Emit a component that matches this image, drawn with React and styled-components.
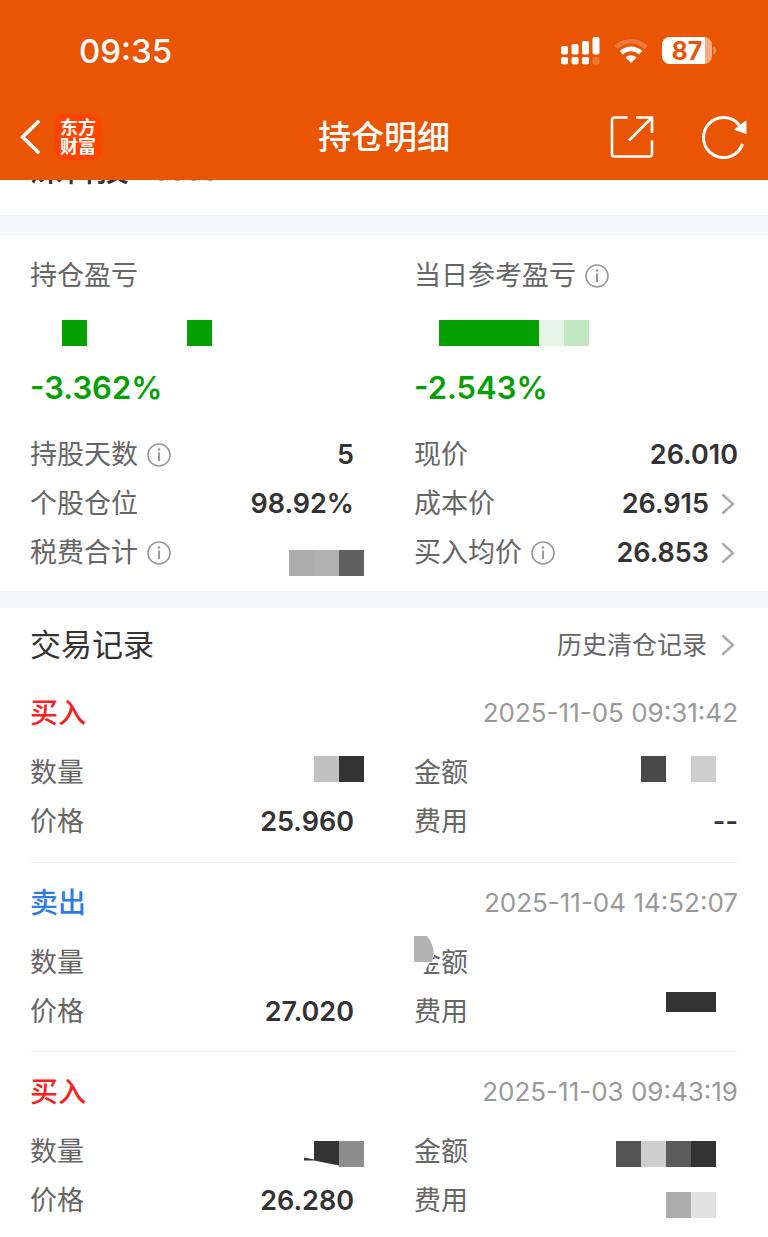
import React from "react";
import styled, { createGlobalStyle } from "styled-components";

const GlobalStyle = createGlobalStyle`
  * { box-sizing: border-box; }
  body {
    margin: 0;
    background: #fff;
    color: #333;
    font-family: Inter, "Noto Sans CJK SC", sans-serif;
    -webkit-font-smoothing: antialiased;
  }
  h1, h2, h3, dl, dt, dd, p { margin: 0; font-weight: inherit; }
  button { border: 0; padding: 0; background: none; font: inherit; color: inherit; cursor: pointer; }
  a { color: inherit; text-decoration: none; }
  svg { display: block; }
`;

const Header = styled.header`
  position: sticky;
  top: 0;
  z-index: 2;
  background: #ea5504;
  color: #fff;
`;

const StatusBar = styled.div`
  display: flex;
  justify-content: space-between;
  align-items: center;
  height: 94px;
  padding: 8px 52px 0 79px;
`;

const Clock = styled.time`
  font-size: 33px;
  line-height: 40px;
  font-weight: 500;
`;

const StatusIcons = styled.div`
  display: flex;
  align-items: center;
  gap: 14px;
`;

const NavBar = styled.nav`
  display: grid;
  grid-template-columns: 1fr auto 1fr;
  align-items: center;
  height: 86px;
  padding: 0 20px;
`;

const NavSide = styled.div`
  display: flex;
  align-items: center;
  gap: ${(p) => p.$gap}px;
  justify-content: ${(p) => (p.$end ? "flex-end" : "flex-start")};
`;

const PageTitle = styled.h1`
  font-size: 33px;
  line-height: 48px;
  font-weight: 500;
`;

const Logo = styled.a`
  display: grid;
  place-content: center;
  width: 46px;
  height: 46px;
  padding-bottom: 3px;
  border-radius: 8px;
  background: #ff4400;
  font-family: "Noto Sans CJK SC", sans-serif;
  font-size: 18px;
  line-height: 19px;
  font-weight: 700;
  text-align: center;
`;

const StockBar = styled.section`
  display: flex;
  align-items: flex-end;
  height: 35px;
  padding: 0 30px 31px;
  overflow: hidden;
`;

const StockTitle = styled.div`
  display: flex;
  align-items: baseline;
  gap: 24px;
  line-height: 24px;
`;

const StockName = styled.h2`
  font-size: 33px;
  font-weight: 500;
`;

const StockCode = styled.span`
  font-size: 26px;
  color: #999;
`;

const Band = styled.div`
  height: ${(p) => p.$size}px;
  background: #f6f7fa;
`;

const Summary = styled.section`
  padding: 21px 30px 14px;
`;

const Columns = styled.div`
  display: grid;
  grid-template-columns: 1fr 1fr;
  column-gap: 60px;
`;

const Label = styled.span`
  display: inline-flex;
  align-items: center;
  gap: 9px;
  font-size: 27px;
  line-height: 40px;
  color: #666;
`;

const Change = styled.p`
  font-size: 31px;
  line-height: 40px;
  font-weight: 600;
  color: #04a004;
`;

const Gain = styled.div`
  display: flex;
  flex-direction: column;
  padding-bottom: 22px;
`;

const Fields = styled.dl`
  display: flex;
  flex-direction: column;
`;

const Field = styled.div`
  display: flex;
  justify-content: space-between;
  align-items: center;
  height: 49px;
`;

const Value = styled.dd`
  font-size: 27px;
  line-height: 40px;
  font-weight: 600;
`;

const LinkValue = styled.button`
  display: flex;
  align-items: center;
  gap: 11px;
`;

const MaskRow = styled.span`
  display: flex;
  margin: ${(p) => p.$margin || "0"};
`;

const Block = styled.span`
  width: ${(p) => p.$w || 25}px;
  height: ${(p) => p.$h || 26}px;
  background: ${(p) => p.$color};
  clip-path: ${(p) => p.$clip || "none"};
`;

const Records = styled.section`
  padding: 0 30px;
`;

const RecordsHead = styled.header`
  display: flex;
  justify-content: space-between;
  align-items: center;
  height: 65px;
  padding-top: 8px;
`;

const RecordsTitle = styled.h2`
  font-size: 31px;
  line-height: 44px;
`;

const HistoryLink = styled.a`
  display: flex;
  align-items: center;
  gap: 13px;
  font-size: 25px;
  line-height: 40px;
  color: #666;
`;

const Record = styled.article`
  height: 189px;
  padding-top: 20px;
  & + & {
    border-top: 1px solid #f0f0f0;
  }
`;

const RecordHead = styled.div`
  display: flex;
  justify-content: space-between;
  align-items: center;
  height: 40px;
  margin-bottom: 15px;
`;

const Side = styled.h3`
  font-size: 28px;
  line-height: 40px;
  font-weight: 500;
  color: ${(p) => (p.$sell ? "#2d7be5" : "#fb2020")};
`;

const Stamp = styled.time`
  font-size: 26px;
  line-height: 40px;
  color: #999;
`;

const Smudged = styled.span`
  position: relative;
`;

const Smudge = styled.svg`
  position: absolute;
  left: 0;
  top: -7px;
`;

const Signal = () => (
  <svg width="40" height="28" viewBox="0 0 40 28" fill="#fff" aria-hidden="true">
    <rect x="1" y="9" width="7" height="8.500" rx="2" />
    <rect x="11.500" y="7" width="7" height="10.500" rx="2" />
    <rect x="22" y="4" width="7" height="13.500" rx="2" />
    <rect x="32.500" y="0" width="7" height="17.500" rx="2" />
    <rect x="1" y="20" width="7" height="7.500" rx="2" />
    <rect x="11.500" y="20" width="7" height="7.500" rx="2" />
    <rect x="22" y="20" width="7" height="7.500" rx="2" />
    <rect x="32.500" y="20" width="7" height="7.500" rx="2" opacity=".2" />
  </svg>
);

const Wifi = () => (
  <svg width="34" height="26" viewBox="0 0 34 26" fill="none" stroke="#fff" aria-hidden="true">
    <path d="M2 9.500C10.500 1.200 23.500 1.200 32 9.500" strokeWidth="4.500" opacity=".22" />
    <path d="M7.300 14.800C13 9.600 21 9.600 26.700 14.800" strokeWidth="4.800" />
    <path d="M11.500 19.500C14.800 16.600 19.200 16.600 22.500 19.500L17 25Z" fill="#fff" stroke="none" />
  </svg>
);

const Battery = () => (
  <svg width="54" height="28" viewBox="0 0 54 28" role="img" aria-label="87%">
    <defs>
      <clipPath id="cell"><rect width="50" height="27" rx="8" /></clipPath>
    </defs>
    <g clipPath="url(#cell)">
      <rect width="50" height="27" fill="#f5aa82" />
      <rect width="43" height="27" fill="#fff" />
    </g>
    <path d="M51.500 9.500c3 1.500 3 6.500 0 8z" fill="#f5aa82" />
    <text x="25" y="22.500" textAnchor="middle" fontFamily="Inter, sans-serif" fontSize="25" fontWeight="700" fill="#ea5504">87</text>
  </svg>
);

const Back = () => (
  <svg width="20" height="34" viewBox="0 0 20 34" fill="none" stroke="#fff" strokeWidth="3.800" strokeLinecap="round" strokeLinejoin="round" aria-hidden="true">
    <path d="M18 2L2.500 17L18 32" />
  </svg>
);

const Share = () => (
  <svg width="44" height="44" viewBox="0 0 44 44" fill="none" stroke="#fff" strokeWidth="2.600" aria-hidden="true">
    <path d="M17.500 2.500H4.500a2.500 2.500 0 0 0-2.500 2.500V39a2.500 2.500 0 0 0 2.500 2.500H39.500a2.500 2.500 0 0 0 2.500-2.500V25.500" />
    <path d="M26 2.500H42V18M42 2.500L19 25.500" />
  </svg>
);

const Refresh = () => (
  <svg width="46" height="44" viewBox="0 0 46 44" fill="none" stroke="#fff" strokeWidth="3" aria-hidden="true">
    <path d="M40.500 29A20 20 0 1 1 37.500 10.500" />
    <path d="M44 6V18.500L32.500 14.500Z" fill="#fff" strokeWidth="1" strokeLinejoin="round" />
  </svg>
);

const Info = () => (
  <svg width="24" height="24" viewBox="0 0 24 24" fill="none" stroke="#999" strokeWidth="1.600" aria-hidden="true">
    <circle cx="12" cy="12" r="11" />
    <path d="M12 9.500V18" strokeWidth="2" />
    <circle cx="12" cy="6.500" r="1.300" fill="#999" stroke="none" />
  </svg>
);

const Chevron = () => (
  <svg width="18" height="22" viewBox="0 0 18 22" fill="none" stroke="#aaa" strokeWidth="2.400" strokeLinecap="round" aria-hidden="true">
    <path d="M3 2L13 11L3 20" />
  </svg>
);

const InfoButton = ({ about }) => (
  <button type="button" aria-label={`${about}说明`}><Info /></button>
);

const Mask = ({ colors, margin }) => (
  <MaskRow $margin={margin}>
    {colors.map((c, i) => <Block key={i} $color={c} />)}
  </MaskRow>
);

const Row = ({ label, info, link, children }) => (
  <Field>
    <dt><Label>{label}{info && <InfoButton about={label} />}</Label></dt>
    <Value>
      {link ? <LinkValue type="button">{children}<Chevron /></LinkValue> : children}
    </Value>
  </Field>
);

const Trade = ({ side, sell, time, count, amount, amountLabel = "金额", price, fee }) => (
  <Record>
    <RecordHead>
      <Side $sell={sell}>{side}</Side>
      <Stamp>{time}</Stamp>
    </RecordHead>
    <Columns>
      <Fields>
        <Row label="数量">{count}</Row>
        <Row label="价格">{price}</Row>
      </Fields>
      <Fields>
        <Row label={amountLabel}>{amount}</Row>
        <Row label="费用">{fee}</Row>
      </Fields>
    </Columns>
  </Record>
);

export default function App() {
  return (
    <>
      <GlobalStyle />
      <Header>
        <StatusBar>
          <Clock>09:35</Clock>
          <StatusIcons><Signal /><Wifi /><Battery /></StatusIcons>
        </StatusBar>
        <NavBar>
          <NavSide $gap={15}>
            <button type="button" aria-label="返回"><Back /></button>
            <Logo href="#home">东方<br />财富</Logo>
          </NavSide>
          <PageTitle>持仓明细</PageTitle>
          <NavSide $gap={48} $end>
            <button type="button" aria-label="分享"><Share /></button>
            <button type="button" aria-label="刷新"><Refresh /></button>
          </NavSide>
        </NavBar>
      </Header>
      <main>
        <StockBar>
          <StockTitle>
            <StockName>深科技</StockName>
            <StockCode>0000</StockCode>
          </StockTitle>
        </StockBar>
        <Band $size={20} />
        <Summary>
          <Columns>
            <Gain>
              <Label>持仓盈亏</Label>
              <Mask margin="24px 0 22px 32px" colors={["#04a004", "transparent", "transparent", "transparent", "transparent", "#04a004"]} />
              <Change>-3.362%</Change>
            </Gain>
            <Gain>
              <Label>当日参考盈亏<InfoButton about="当日参考盈亏" /></Label>
              <Mask margin="24px 0 22px 25px" colors={["#04a004", "#04a004", "#04a004", "#04a004", "#e6f4e6", "#c1e7c1"]} />
              <Change>-2.543%</Change>
            </Gain>
          </Columns>
          <Columns>
            <Fields>
              <Row label="持股天数" info>5</Row>
              <Row label="个股仓位">98.92%</Row>
              <Row label="税费合计" info>
                <Mask margin="20px -10px 0 0" colors={["#acacac", "#b0b0b0", "#606060"]} />
              </Row>
            </Fields>
            <Fields>
              <Row label="现价">26.010</Row>
              <Row label="成本价" link>26.915</Row>
              <Row label="买入均价" info link>26.853</Row>
            </Fields>
          </Columns>
        </Summary>
        <Band $size={17} />
        <Records>
          <RecordsHead>
            <RecordsTitle>交易记录</RecordsTitle>
            <HistoryLink href="#history">历史清仓记录<Chevron /></HistoryLink>
          </RecordsHead>
          <Trade
            side="买入"
            time="2025-11-05 09:31:42"
            count={<Mask margin="0 -10px 8px 0" colors={["#c1c1c1", "#333"]} />}
            amount={<Mask margin="0 22px 8px 0" colors={["#484848", "transparent", "#cecece"]} />}
            price="25.960"
            fee="--"
          />
          <Trade
            side="卖出"
            sell
            time="2025-11-04 14:52:07"
            amountLabel={
              <Smudged>
                金额
                <Smudge width="32" height="40" viewBox="0 0 32 40" aria-hidden="true">
                  <path d="M0 0H20V20L13 31L9 39H0Z" fill="#fff" />
                  <path d="M0 0H13C17.500 6 20 12 19.500 18L18 26H0Z" fill="#b3b3b3" />
                </Smudge>
              </Smudged>
            }
            price="27.020"
            fee={<MaskRow $margin="0 22px 20px 0"><Block $w={50} $h={20} $color="#333" /></MaskRow>}
          />
          <Trade
            side="买入"
            time="2025-11-03 09:43:19"
            count={
              <MaskRow $margin="4px -10px 0 0">
                <Block $w={10} $color="#333" $clip="polygon(0 17px, 100% 19px, 100% 20px, 0 20px)" />
                <Block $color="#333" $clip="polygon(0 0, 100% 0, 100% 25px, 0 20px)" />
                <Block $color="#8d8d8d" />
              </MaskRow>
            }
            amount={<Mask margin="4px 22px 0 0" colors={["#555", "#cecece", "#5c5c5c", "#333"]} />}
            price="26.280"
            fee={<Mask margin="8px 22px 0 0" colors={["#adadad", "#e2e2e2"]} />}
          />
        </Records>
      </main>
    </>
  );
}
